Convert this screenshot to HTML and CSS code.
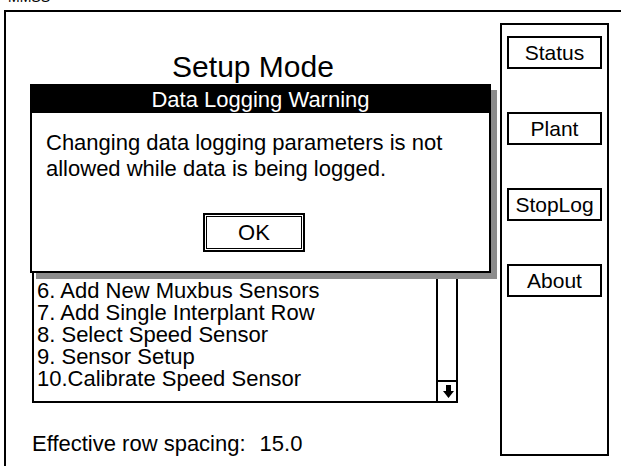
FILE: index.html
```html
<!DOCTYPE html>
<html lang="en">
  <head>
    <meta charset="UTF-8" />
    <meta name="viewport" content="width=device-width, initial-scale=1.0" />
    <title>Setup Mode</title>
    <link rel="stylesheet" href="styles.css">
  </head>
  <body>
    <div class="caption"><span>MMSS</span></div>

    <div class="frame">
      <div class="main">
        <h1 class="title">Setup Mode</h1>

        <div class="list">
          <!-- rows above 6 sit under the warning dialog -->
          <ol class="items">
            <li>6. Add New Muxbus Sensors</li>
            <li>7. Add Single Interplant Row</li>
            <li>8. Select Speed Sensor</li>
            <li>9. Sensor Setup</li>
            <li>10.Calibrate Speed Sensor</li>
          </ol>
          <div class="scroll">
            <div class="scroll-btn">
              <svg width="18" height="19" viewBox="0 0 18 19">
                <path d="M8 3 H13 V9 H16 L10.5 16 L5 9 H8 Z" fill="#000" />
              </svg>
            </div>
          </div>
        </div>

        <p class="spacing">Effective row spacing:<span class="value">15.0</span></p>
      </div>

      <div class="panel">
        <button class="btn">Status</button>
        <button class="btn">Plant</button>
        <button class="btn">StopLog</button>
        <button class="btn">About</button>
      </div>

      <!-- modal warning over the setup list -->
      <div class="dialog">
        <div class="dialog-title">Data Logging Warning</div>
        <p class="dialog-text">
          Changing data logging parameters is not<br />
          allowed while data is being logged.
        </p>
        <button class="ok">OK</button>
      </div>
    </div>
  </body>
</html>
```

FILE: styles.css
```css
body {
  margin: 0;
  width: 621px;
  height: 466px;
  overflow: hidden;
  background: #fff;
  color: #000;
  font-family: "Liberation Sans", Arial, sans-serif;
  font-size: 22px;
}

.caption {
  height: 10px;
  overflow: hidden;
  padding-left: 8px;
  font-size: 14px;
  line-height: 14px;
}

.caption span {
  display: block;
  margin-top: -10px;
}

.frame {
  position: relative;
  display: flex;
  height: 456px;
  box-sizing: border-box;
  margin-left: 4px;
  border-left: 2px solid #000;
  border-top: 2px solid #000;
}

.main {
  flex: 1;
  display: flex;
  flex-direction: column;
}

.title {
  margin: 40px 0 0;
  font-size: 30px;
  font-weight: normal;
  line-height: 30px;
  text-align: center;
}

.list {
  display: flex;
  width: 426px;
  box-sizing: border-box;
  margin: 82px 0 0 26px;
  border: 2px solid #000;
}

.items {
  flex: 1;
  list-style: none;
  margin: 0;
  padding: 114px 0 11px 3px;
  line-height: 22px;
}

.scroll {
  width: 20px;
  box-sizing: border-box;
  border-left: 2px solid #000;
  display: flex;
  flex-direction: column;
  justify-content: flex-end;
}

.scroll-btn {
  height: 21px;
  box-sizing: border-box;
  border-top: 2px solid #000;
}

.scroll-btn svg {
  display: block;
}

.spacing {
  margin: 30px 0 0 26px;
  line-height: 22px;
}

.spacing .value {
  margin-left: 14px;
}

.panel {
  width: 109px;
  height: 433px;
  box-sizing: border-box;
  margin: 11px 12px 0 0;
  padding-top: 11px;
  border: 2px solid #000;
  display: flex;
  flex-direction: column;
  align-items: center;
  gap: 43px;
}

.btn {
  width: 95px;
  height: 33px;
  padding: 0;
  background: #fff;
  border: 2px solid #000;
  border-radius: 0;
  font-family: inherit;
  font-size: 21px;
  color: #000;
}

.dialog {
  position: absolute;
  left: 24px;
  top: 72px;
  width: 461px;
  height: 189px;
  box-sizing: border-box;
  background: #fff;
  border: 2px solid #000;
  box-shadow: 6px 6px 0 #8c8c8c;
}

.dialog-title {
  height: 27px;
  background: #000;
  color: #fff;
  line-height: 27px;
  text-align: center;
}

.dialog-text {
  margin: 17px 0 0 14px;
  line-height: 26px;
}

.ok {
  display: block;
  width: 102px;
  height: 39px;
  margin: 31px 0 0 171px;
  padding: 0;
  background: #fff;
  border: 2px solid #000;
  border-radius: 0;
  box-shadow: inset 0 0 0 1px #fff, inset 0 0 0 2px #000;
  font-family: inherit;
  font-size: 22px;
  color: #000;
}
```
